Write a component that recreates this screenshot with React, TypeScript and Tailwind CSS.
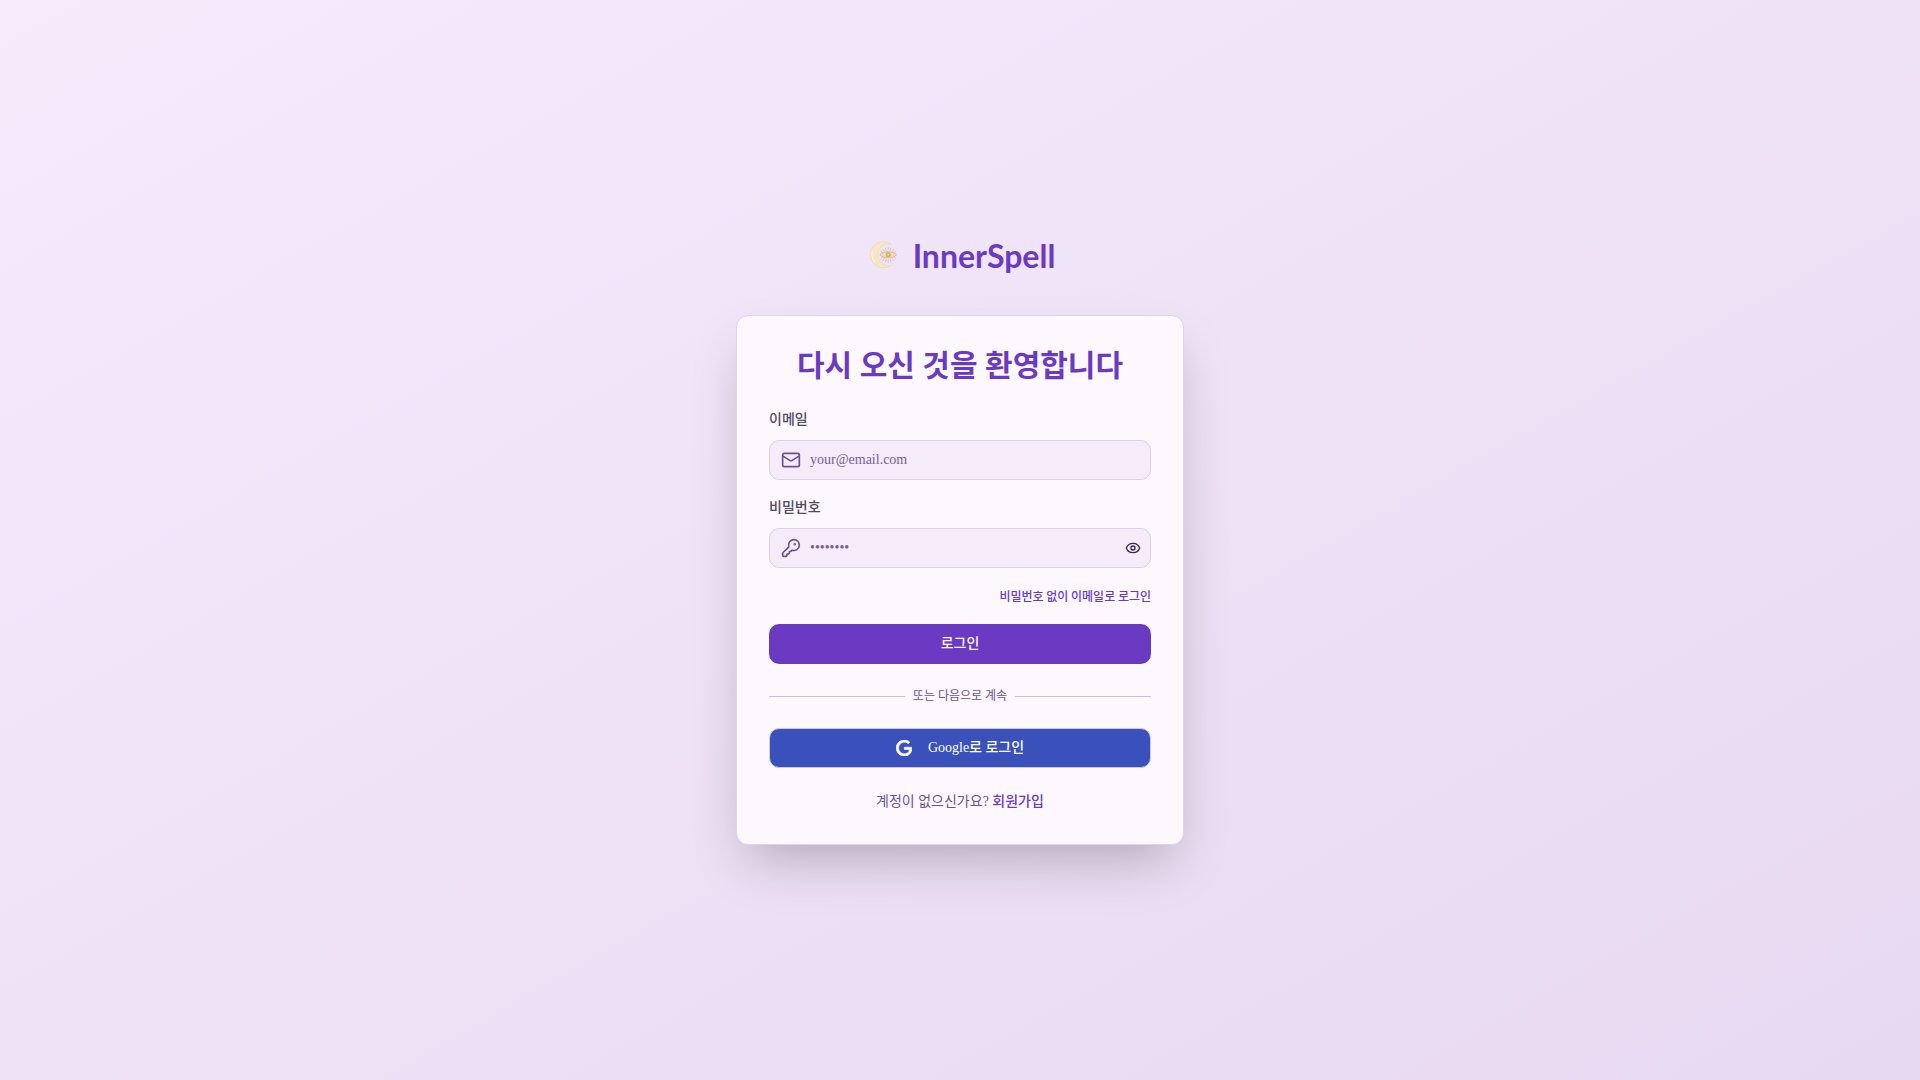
import { Eye, KeyRound, Mail } from "lucide-react";

const serif = "font-['Liberation_Serif','Noto_Sans_CJK_KR',serif]";

function MoonEyeLogo() {
  return (
    <svg className="size-9" viewBox="0 0 36 36" fill="none" aria-hidden="true">
      <path
        d="M26.5 7.2A13.2 13.2 0 1 0 26.5 28.2A10.9 10.9 0 1 1 26.5 7.2Z"
        fill="#f7e6c6"
        stroke="#eddab4"
        strokeWidth="0.8"
      />
      <path d="M7.4 14A12 12 0 0 0 10 25.5" stroke="#fbf2e2" strokeWidth="1.2" />
      <g transform="translate(-0.8 -0.8)">
        <g stroke="#c9b4b2" strokeWidth="0.7" strokeLinecap="round">
          <path d="M24 11.2v2.6M21.2 11.8l.7 2.4M26.8 11.8l-.7 2.4M18.6 13l1.3 2.1M29.4 13l-1.3 2.1M16.7 15l1.7 1.4M31.3 15l-1.7 1.4" />
          <path d="M24 26.2v-2.6M21.2 25.6l.7-2.4M26.8 25.6l-.7-2.4M18.6 24.4l1.3-2.1M29.4 24.4l-1.3-2.1M16.7 22.4l1.7-1.4M31.3 22.4l-1.7-1.4" />
        </g>
        <path
          d="M15.5 18.6C19.5 14.4 28.5 14.4 32.5 18.6C28.5 22.6 19.5 22.6 15.5 18.6Z"
          fill="#f0dcb8"
          stroke="#e0bf84"
          strokeWidth="1"
        />
        <circle cx="24" cy="18.6" r="2.5" fill="#d8ae63" />
        <circle cx="24" cy="18.4" r="0.9" fill="#f1dfc6" />
      </g>
    </svg>
  );
}

function GoogleMark() {
  return (
    <svg className="size-4" viewBox="0 0 24 24" fill="currentColor" aria-hidden="true">
      <path d="M12.48 10.92v3.28h7.84c-.24 1.84-.853 3.187-1.787 4.133-1.147 1.147-2.933 2.4-6.053 2.4-4.827 0-8.6-3.893-8.6-8.72s3.773-8.72 8.6-8.72c2.6 0 4.507 1.027 5.907 2.347l2.307-2.307C18.747 1.44 16.133 0 12.48 0 5.867 0 .307 5.387.307 12s5.56 12 12.173 12c3.573 0 6.267-1.173 8.373-3.36 2.16-2.16 2.84-5.213 2.84-7.667 0-.76-.053-1.467-.173-2.053H12.48z" stroke="currentColor" />
    </svg>
  );
}

const field =
  "h-10 w-full rounded-[10px] border border-[#d8d0e5] bg-[#f5ebf9] pl-10 text-sm text-[#3b2a55] outline-none placeholder:text-[#75609a] focus:border-[#6b3ac2]";

export default function App() {
  return (
    <main
      className={`flex min-h-screen flex-col items-center justify-center bg-linear-to-br from-[#f5ebfb] to-[#e8d9f2] px-4 text-sm ${serif}`}
    >
      <a href="#" className="mb-10 flex h-10 items-center gap-3 text-[#6b3ac2]">
        <MoonEyeLogo />
        <span className="pt-0.5 font-['Lato',sans-serif] text-[32px] leading-10 font-bold">InnerSpell</span>
      </a>

      <section className="w-full max-w-md rounded-xl border border-[#ddd2ef] bg-[#fcf8fe] px-8 py-8 shadow-2xl">
        <h1 className="text-center text-3xl leading-9 font-bold text-[#6b3ac2]">
          다시 오신 것을 환영합니다
        </h1>

        <form className="mt-6" onSubmit={(e) => e.preventDefault()}>
          <label htmlFor="email" className="block pt-0.5 leading-5 font-medium text-[#514863]">
            이메일
          </label>
          <div className="relative mt-2.5">
            <Mail className="absolute top-2.5 left-3 size-5 text-[#6b5295]" />
            <input id="email" type="email" placeholder="your@email.com" className={`${field} pr-3`} />
          </div>

          <label htmlFor="password" className="mt-4 block pt-0.5 leading-5 font-medium text-[#514863]">
            비밀번호
          </label>
          <div className="relative mt-2.5">
            <KeyRound className="absolute top-2.5 left-3 size-5 text-[#6b5295]" />
            <input id="password" type="password" placeholder="••••••••" className={`${field} pr-10`} />
            <button
              type="button"
              aria-label="비밀번호 표시"
              className="absolute top-1 right-0.5 flex size-8 items-center justify-center text-[#35264d]"
            >
              <Eye className="size-4" />
            </button>
          </div>

          <div className="mt-5 flex justify-end">
            <a href="#" className="font-['Noto_Sans_CJK_KR',sans-serif] text-xs leading-4 font-medium text-[#6b3ac2]">
              비밀번호 없이 이메일로 로그인
            </a>
          </div>

          <button type="submit" className="mt-5 h-10 w-full rounded-[10px] bg-[#6b3ac2] font-medium text-[#faf5ff]">
            로그인
          </button>
        </form>

        <div className="mt-6 flex items-center gap-2 text-xs leading-4 text-[#6b5295]">
          <span className="h-px flex-1 bg-[#cbc1d9]" />
          <span>또는 다음으로 계속</span>
          <span className="h-px flex-1 bg-[#cbc1d9]" />
        </div>

        <button
          type="button"
          className="mt-6 flex h-10 w-full items-center justify-center gap-4 rounded-[10px] border border-[#cfc8e2] bg-[#3a50bb] font-medium text-white"
        >
          <GoogleMark />
          <span>Google로 로그인</span>
        </button>

        <p className="mt-6 text-center leading-5 text-[#6b5295]">
          계정이 없으신가요?{" "}
          <a href="#" className="font-medium text-[#6b3ac2]">
            회원가입
          </a>
        </p>
      </section>
    </main>
  );
}
